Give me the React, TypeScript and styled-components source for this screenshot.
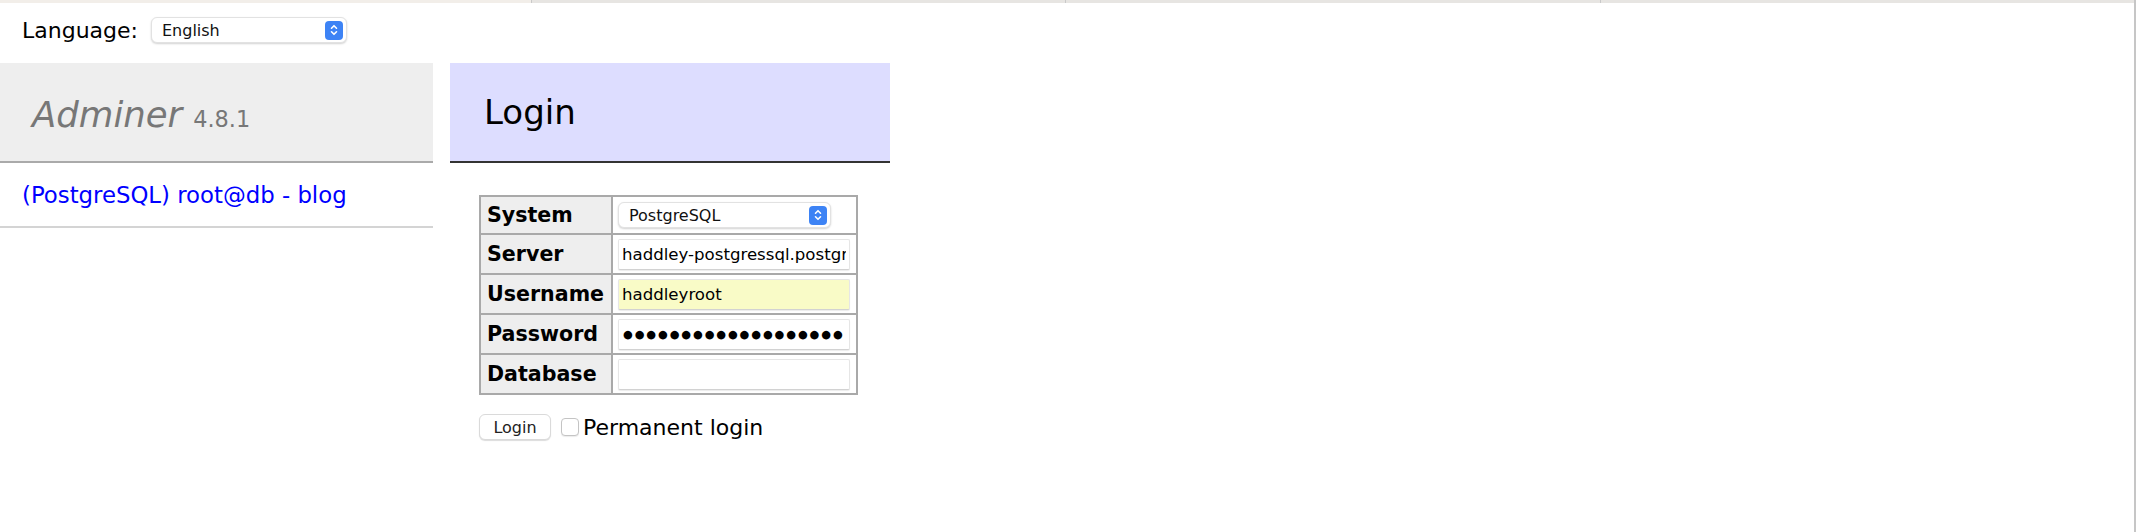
import React from "react";
import styled, { createGlobalStyle } from "styled-components";

const GlobalStyle = createGlobalStyle`
  html, body { margin: 0; padding: 0; background: #fff; }
  body { font-family: "DejaVu Sans", Verdana, sans-serif; color: #000; }
  * { box-sizing: border-box; }
`;

const Page = styled.div`
  display: flex;
  width: 2136px;
  height: 532px;
  overflow: hidden;
  background: #fff;
`;

const Main = styled.div`
  flex: 1;
  display: flex;
  flex-direction: column;
`;

const RightEdge = styled.div`
  width: 2px;
  background: #c6c6c6;
`;

const TopStrip = styled.div`
  display: flex;
  height: 3px;
`;

const TabSeg = styled.div<{ $w?: number; $active?: boolean }>`
  flex: ${(p) => (p.$w ? `0 0 ${p.$w}px` : "1")};
  background: ${(p) => (p.$active ? "#f2eee9" : "#e7e5e2")};
  border-left: ${(p) => (p.$active ? "none" : "1px solid #c9c9c9")};
`;

const LangBar = styled.div`
  display: flex;
  align-items: center;
  gap: 13px;
  height: 54px;
  padding-left: 22px;
  margin-bottom: 6px;
  font-size: 22px;
`;

const MacSelect = styled.div<{ $w: number }>`
  display: flex;
  align-items: center;
  justify-content: space-between;
  width: ${(p) => p.$w}px;
  height: 26px;
  padding: 0 3px 0 10px;
  background: #fff;
  border-radius: 6px;
  border: 1px solid #e2e2e2;
  box-shadow: 0 1px 2px rgba(0, 0, 0, 0.18);
  font-size: 16px;
  color: #111;
`;

const Stepper = styled.span`
  display: flex;
  align-items: center;
  justify-content: center;
  width: 18px;
  height: 19px;
  border-radius: 4px;
  background: #3d83f5;
`;

const Columns = styled.div`
  display: flex;
  align-items: flex-start;
  gap: 17px;
`;

const Menu = styled.div`
  width: 433px;
`;

const Brand = styled.h1`
  margin: 0;
  height: 100px;
  padding: 32px 0 0 32px;
  background: #eee;
  border-bottom: 2px solid #aaa;
  font-weight: normal;
  font-size: 35.5px;
  line-height: 40px;
  color: #777;
`;

const BrandName = styled.span`
  font-style: italic;
`;

const Version = styled.span`
  font-size: 22.4px;
  margin-left: 11px;
  color: #777;
`;

const DbLink = styled.p`
  margin: 0;
  height: 65px;
  padding: 18px 0 0 22px;
  font-size: 22.8px;
  line-height: 28px;
  border-bottom: 2px solid #d4d4d4;
  a {
    color: #0000ff;
    text-decoration: none;
  }
`;

const Content = styled.div`
  width: 440px;
`;

const Heading = styled.h2`
  margin: 0;
  height: 100px;
  padding: 29px 0 0 34px;
  background: #ddf;
  border-bottom: 2px solid #333;
  font-weight: normal;
  font-size: 34px;
  line-height: 40px;
  color: #000;
`;

const LoginTable = styled.table`
  border-collapse: collapse;
  margin: 32px 0 0 29px;
  width: 379px;
  font-size: 20.6px;
`;

const Row = styled.tr<{ $h: number }>`
  height: ${(p) => p.$h}px;
`;

const Th = styled.th`
  width: 132px;
  padding: 0 0 0 6px;
  background: #eee;
  border: 2px solid #a9a9a9;
  text-align: left;
  font-weight: bold;
`;

const Td = styled.td`
  padding: 0 4px 0 5px;
  border: 2px solid #a9a9a9;
  vertical-align: middle;
`;

const Field = styled.input<{ $fill?: boolean; $dots?: boolean }>`
  display: block;
  width: 232px;
  height: 31px;
  margin: 0;
  padding: 0 3px;
  border: 1px solid #e6e6e6;
  border-bottom-color: #d2d2d2;
  border-radius: 2px;
  box-shadow: 0 1px 1px rgba(0, 0, 0, 0.08);
  background: ${(p) => (p.$fill ? "#f9fbc7" : "#fff")};
  font-family: "DejaVu Sans", Verdana, sans-serif;
  font-size: ${(p) => (p.$dots ? "11.2px" : "16.6px")};
  letter-spacing: ${(p) => (p.$dots ? "1.9px" : "0")};
  padding-left: ${(p) => (p.$dots ? "4px" : "3px")};
  color: #000;
  outline: none;
`;

const Actions = styled.div`
  display: flex;
  align-items: center;
  margin: 19px 0 0 29px;
`;

const Button = styled.button`
  width: 72px;
  height: 26px;
  padding: 0;
  background: #fff;
  border: 1px solid #dadada;
  border-radius: 6px;
  box-shadow: 0 1px 1px rgba(0, 0, 0, 0.14);
  font-family: "DejaVu Sans", Verdana, sans-serif;
  font-size: 16px;
  color: #222;
`;

const Check = styled.input`
  appearance: none;
  width: 18px;
  height: 18px;
  margin: 0 4px 0 10px;
  border: 1px solid #c4c4c4;
  border-radius: 4px;
  background: #fff;
  box-shadow: 0 1px 1px rgba(0, 0, 0, 0.08);
`;

const CheckLabel = styled.label`
  display: flex;
  align-items: center;
  font-size: 22px;
`;

const Chevrons = () => (
  <svg width="10" height="14" viewBox="0 0 10 14" fill="none">
    <path d="M2.5 5.2 L5 2.7 L7.5 5.2" stroke="#fff" strokeWidth="1.6" strokeLinecap="round" strokeLinejoin="round" />
    <path d="M2.5 8.8 L5 11.3 L7.5 8.8" stroke="#fff" strokeWidth="1.6" strokeLinecap="round" strokeLinejoin="round" />
  </svg>
);

const masked = "\u25CF".repeat(19);

export default function App() {
  return (
    <>
      <GlobalStyle />
      <Page>
        <Main>
          <TopStrip>
            <TabSeg $w={531} $active />
            <TabSeg $w={534} />
            <TabSeg $w={535} />
            <TabSeg />
          </TopStrip>
          <LangBar>
            <span>Language:</span>
            <MacSelect $w={196}>
              <span>English</span>
              <Stepper>
                <Chevrons />
              </Stepper>
            </MacSelect>
          </LangBar>
          <Columns>
            <Menu>
              <Brand>
                <BrandName>Adminer</BrandName>
                <Version>4.8.1</Version>
              </Brand>
              <DbLink>
                <a href="#">(PostgreSQL) root@db - blog</a>
              </DbLink>
            </Menu>
            <Content>
              <Heading>Login</Heading>
              <LoginTable>
                <tbody>
                  <Row $h={38}>
                    <Th>System</Th>
                    <Td>
                      <MacSelect $w={213}>
                        <span>PostgreSQL</span>
                        <Stepper>
                          <Chevrons />
                        </Stepper>
                      </MacSelect>
                    </Td>
                  </Row>
                  <Row $h={40}>
                    <Th>Server</Th>
                    <Td>
                      <Field type="text" readOnly value="haddley-postgressql.postgres" />
                    </Td>
                  </Row>
                  <Row $h={40}>
                    <Th>Username</Th>
                    <Td>
                      <Field type="text" readOnly value="haddleyroot" $fill />
                    </Td>
                  </Row>
                  <Row $h={40}>
                    <Th>Password</Th>
                    <Td>
                      <Field type="text" readOnly value={masked} $dots aria-label="Password" />
                    </Td>
                  </Row>
                  <Row $h={40}>
                    <Th>Database</Th>
                    <Td>
                      <Field type="text" readOnly value="" />
                    </Td>
                  </Row>
                </tbody>
              </LoginTable>
              <Actions>
                <Button type="button">Login</Button>
                <CheckLabel>
                  <Check type="checkbox" />
                  Permanent login
                </CheckLabel>
              </Actions>
            </Content>
          </Columns>
        </Main>
        <RightEdge />
      </Page>
    </>
  );
}
